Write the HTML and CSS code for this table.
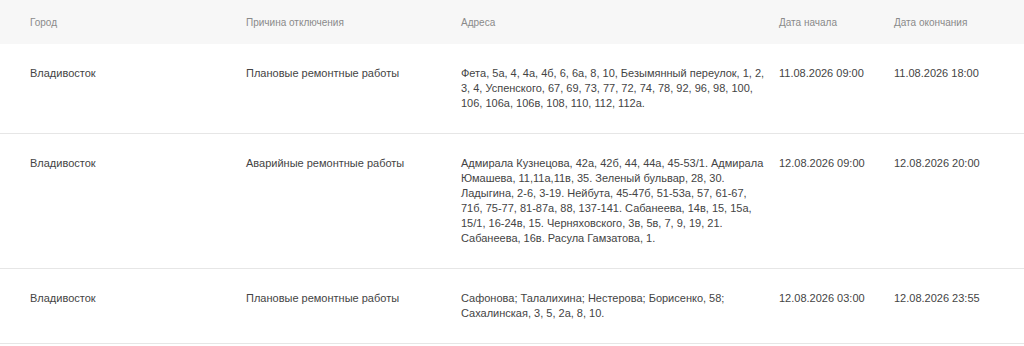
FILE: index.html
```html
<!DOCTYPE html>
<html lang="ru">
<head>
<meta charset="utf-8">
<title>Отключения</title>
<link rel="stylesheet" href="styles.css">
</head>
<body>
<div class="outages">
  <div class="row head">
    <div class="cell">Город</div>
    <div class="cell">Причина отключения</div>
    <div class="cell">Адреса</div>
    <div class="cell">Дата начала</div>
    <div class="cell">Дата окончания</div>
  </div>
  <div class="row">
    <div class="cell">Владивосток</div>
    <div class="cell">Плановые ремонтные работы</div>
    <div class="cell addr">Фета, 5а, 4, 4а, 4б, 6, 6а, 8, 10, Безымянный переулок, 1, 2, 3, 4, Успенского, 67, 69, 73, 77, 72, 74, 78, 92, 96, 98, 100, 106, 106а, 106в, 108, 110, 112, 112а.</div>
    <div class="cell">11.08.2026 09:00</div>
    <div class="cell">11.08.2026 18:00</div>
  </div>
  <div class="row">
    <div class="cell">Владивосток</div>
    <div class="cell">Аварийные ремонтные работы</div>
    <div class="cell addr">Адмирала Кузнецова, 42а, 42б, 44, 44а, 45-53/1. Адмирала Юмашева, 11,11а,11в, 35. Зеленый бульвар, 28, 30. Ладыгина, 2-6, 3-19. Нейбута, 45-47б, 51-53а, 57, 61-67, 71б, 75-77, 81-87а, 88, 137-141. Сабанеева, 14в, 15, 15а, 15/1, 16-24в, 15. Черняховского, 3в, 5в, 7, 9, 19, 21. Сабанеева, 16в. Расула Гамзатова, 1.</div>
    <div class="cell">12.08.2026 09:00</div>
    <div class="cell">12.08.2026 20:00</div>
  </div>
  <div class="row">
    <div class="cell">Владивосток</div>
    <div class="cell">Плановые ремонтные работы</div>
    <div class="cell addr">Сафонова; Талалихина; Нестерова; Борисенко, 58; Сахалинская, 3, 5, 2а, 8, 10.</div>
    <div class="cell">12.08.2026 03:00</div>
    <div class="cell">12.08.2026 23:55</div>
  </div>
</div>
</body>
</html>
```

FILE: styles.css
```css
html, body {
  margin: 0;
  padding: 0;
  background: #ffffff;
}

body {
  font-family: "Liberation Sans", Arial, sans-serif;
  font-size: 11px;
  line-height: 15px;
  color: #444444;
}

.outages {
  width: 1024px;
}

.row {
  display: grid;
  grid-template-columns: 216px 215px 318px 115px 1fr;
  padding: 22px 0 22px 30px;
  border-bottom: 1px solid #e6e6e6;
}

.row.head {
  background: #f7f7f7;
  border-bottom: none;
  padding: 0 0 0 30px;
  height: 44px;
  align-items: center;
  font-size: 10px;
  color: #8a8a8a;
}

.addr {
  padding-right: 14px;
}
```
